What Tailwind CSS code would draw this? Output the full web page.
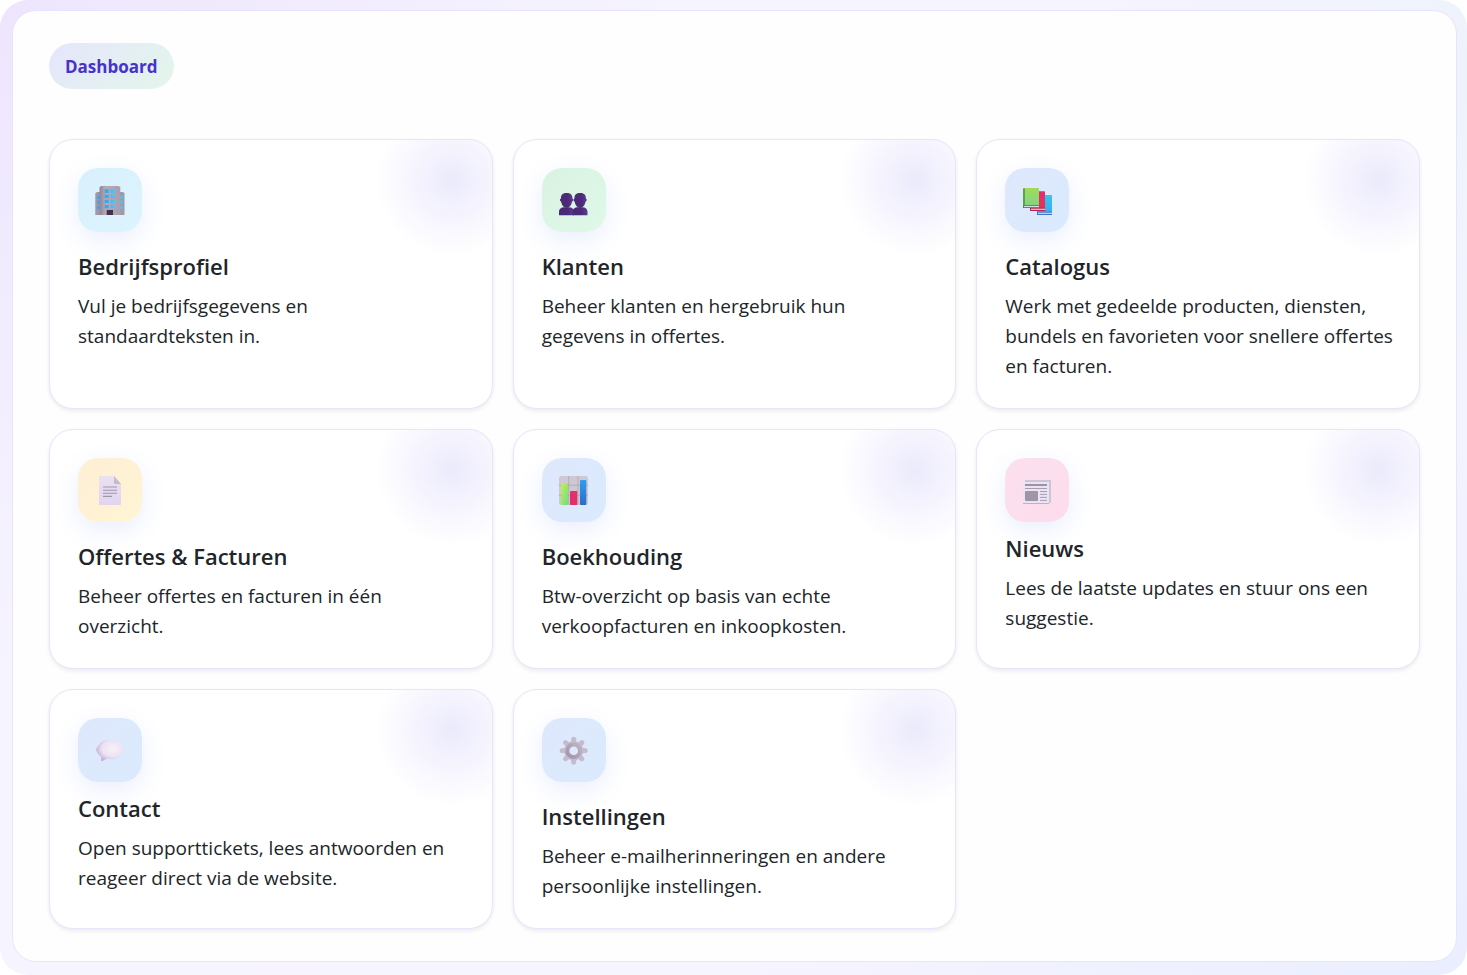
<!DOCTYPE html>
<html lang="nl">
<head>
<meta charset="utf-8">
<meta name="viewport" content="width=device-width, initial-scale=1">
<title>Dashboard</title>
<script src="https://cdn.jsdelivr.net/npm/@tailwindcss/browser@4"></script>
</head>
<body class="bg-white font-['Open_Sans','Noto_Sans',sans-serif] text-[#212529]">
<svg class="absolute size-0" aria-hidden="true">
  <defs>
    <linearGradient id="wall"><stop offset="0" stop-color="#8f8494"/><stop offset=".3" stop-color="#b5abb8"/><stop offset="1" stop-color="#a99fac"/></linearGradient>
    <linearGradient id="glass"><stop offset="0" stop-color="#2fa5ee"/><stop offset="1" stop-color="#4cc8fb"/></linearGradient>
    <linearGradient id="person"><stop offset="0" stop-color="#4a2a72"/><stop offset=".6" stop-color="#4b2a78"/><stop offset="1" stop-color="#633a92"/></linearGradient>
    <linearGradient id="green" x2="0" y2="1"><stop offset="0" stop-color="#a0dc58"/><stop offset="1" stop-color="#7ed389"/></linearGradient>
    <linearGradient id="red" x2="0" y2="1"><stop offset="0" stop-color="#e22d74"/><stop offset="1" stop-color="#e2364e"/></linearGradient>
    <linearGradient id="blue" x2="0" y2="1"><stop offset="0" stop-color="#35c5f0"/><stop offset="1" stop-color="#3fa8ef"/></linearGradient>
    <linearGradient id="paper" x2="0" y2="1"><stop offset="0" stop-color="#e9e2f0"/><stop offset="1" stop-color="#e1d4f0"/></linearGradient>
    <linearGradient id="bar1" x2="1" y2="1"><stop offset="0" stop-color="#c5ee55"/><stop offset="1" stop-color="#6ee07a"/></linearGradient>
    <linearGradient id="bar3" x2="0" y2="1"><stop offset="0" stop-color="#2f9df0"/><stop offset="1" stop-color="#2d6cc4"/></linearGradient>
    <radialGradient id="speech" cx=".6" cy=".4" r=".6"><stop offset="0" stop-color="#f7f1f8"/><stop offset=".65" stop-color="#ece2f1"/><stop offset="1" stop-color="#c9b3db"/></radialGradient>
    <linearGradient id="cog" gradientUnits="userSpaceOnUse" x1="0" y1="2" x2="0" y2="31"><stop offset="0" stop-color="#c6bccb"/><stop offset="1" stop-color="#c8b2da"/></linearGradient>
    <linearGradient id="hub" x1="1" x2="0" y2="1"><stop offset="0" stop-color="#bdb4c3"/><stop offset="1" stop-color="#a094ab"/></linearGradient>
  </defs>
</svg>
<div class="min-h-screen rounded-[28px] bg-[radial-gradient(circle_at_0%_0%,#ede5fd,transparent_38%),radial-gradient(circle_at_100%_8%,#edf3fb,transparent_22%),linear-gradient(135deg,#f7f4ff_0%,#f6f4ff_70%,#eaeeff_100%)] pt-[10px] pr-[10px] pb-[13px] pl-[12px]">
  <main class="rounded-3xl border border-[#e8e4ff] bg-[#fefefe] px-9 pt-8 pb-8">
    <h1 class="inline-flex h-[46px] items-center rounded-full bg-[linear-gradient(135deg,#e5e6fc,#e3f6ea)] px-4 pt-px text-[17px] font-bold text-[#4733c9]">Dashboard</h1>
    <div class="mt-[50px] grid grid-cols-3 gap-5">

      <a href="#bedrijfsprofiel" class="rounded-3xl border border-[#e8e4fb] bg-white bg-[radial-gradient(circle_at_calc(100%-40px)_40px,#ebeafc,#f5f4fe_36px,#fff_76px)] px-7 pt-7 pb-[27px] shadow-[0_2px_4px_rgba(0,0,0,0.08)]">
        <span class="flex size-16 items-center justify-center rounded-[20px] bg-[linear-gradient(135deg,#d8f0fb,#ddf4ff)] shadow-[0_8px_24px_rgba(79,125,250,0.12)]">
          <svg class="size-8" viewBox="0 0 32 32" aria-hidden="true">
            <path d="M1.3 9.2 3 8h4v23H1.3zM25 8h4l1.5 1.2V31H25z" fill="#a197a6"/>
            <path d="M5.5 3.5 7 2h18l1.3 1.5V31H5.5z" fill="url(#wall)"/>
            <g fill="url(#glass)"><path d="M10.8 5.3H15V9h-4.2zM16.8 5.3H21V9h-4.2zM10.8 10.7H15V14h-4.2zM16.8 10.7H21V14h-4.2zM10.8 15.8H15V19h-4.2zM16.8 15.8H21V19h-4.2zM10.8 21H15v3.2h-4.2zM16.8 21H21v3.2h-4.2z"/><path d="M3.5 11.5h2V15h-2zM3.5 16.5h2V20h-2zM3.5 22h2v3h-2zM26.5 11.5h2V15h-2zM26.5 16.5h2V20h-2zM26.5 22h2v3h-2z"/></g>
            <path d="M12.7 26H19v5h-6.3z" fill="#42304f"/>
          </svg>
        </span>
        <h2 class="mt-[19px] text-[22px]/[30px] font-semibold">Bedrijfsprofiel</h2>
        <p class="mt-[10px] text-[19px]/[30px]">Vul je bedrijfsgegevens en standaardteksten in.</p>
      </a>

      <a href="#klanten" class="rounded-3xl border border-[#e8e4fb] bg-white bg-[radial-gradient(circle_at_calc(100%-40px)_40px,#ebeafc,#f5f4fe_36px,#fff_76px)] px-7 pt-7 pb-[27px] shadow-[0_2px_4px_rgba(0,0,0,0.08)]">
        <span class="flex size-16 items-center justify-center rounded-[20px] bg-[linear-gradient(135deg,#d9f2e2,#dff9e9)] shadow-[0_8px_24px_rgba(79,125,250,0.12)]">
          <svg class="size-8" viewBox="0 0 32 32" aria-hidden="true">
            <g id="bust" fill="url(#person)"><path d="M3 14.5C2.8 10.5 5 9 8.600 9s6 1.500 5.800 5.500c1.200.3 1.200 2.700-.4 3.200-.5 3.400-2.600 6-5.400 6s-4.900-2.600-5.400-6c-1.600-.5-1.600-2.900-.2-3.200z"/><path d="M1 31.300v-3.500c0-3 2.500-4.600 5-4.600h5c3 0 5 1.800 5 4.600v3.500z"/></g>
            <use href="#bust" x="13.500"/>
          </svg>
        </span>
        <h2 class="mt-[19px] text-[22px]/[30px] font-semibold">Klanten</h2>
        <p class="mt-[10px] text-[19px]/[30px]">Beheer klanten en hergebruik hun gegevens in offertes.</p>
      </a>

      <a href="#catalogus" class="rounded-3xl border border-[#e8e4fb] bg-white bg-[radial-gradient(circle_at_calc(100%-40px)_40px,#ebeafc,#f5f4fe_36px,#fff_76px)] px-7 pt-7 pb-[27px] shadow-[0_2px_4px_rgba(0,0,0,0.08)]">
        <span class="flex size-16 items-center justify-center rounded-[20px] bg-[linear-gradient(135deg,#dfe8fc,#daeafe)] shadow-[0_8px_24px_rgba(79,125,250,0.12)]">
          <svg class="size-8" viewBox="0 0 32 32" aria-hidden="true">
            <rect x="16" y="11" width="15" height="20" rx=".7" fill="url(#blue)"/><path d="M16 27.700h15V31H16z" fill="#3d74c9"/><path d="M17 28.700h14v1.200H17z" fill="#d9d8f2"/>
            <rect x="9" y="7.300" width="15" height="19.700" rx=".7" fill="url(#red)"/><path d="M9 23.700h15V27H9z" fill="#b52450"/><path d="M10 24.700h14v1.200H10z" fill="#eccfe0"/>
            <rect x="2" y="4" width="16" height="20" rx=".7" fill="url(#green)"/><path d="M2 4.500h2V24H2z" fill="#5aa54a"/><path d="M2 21h16v3H2z" fill="#40866f"/><path d="M3 21.900h15v1.200H3z" fill="#d8dfdd"/>
          </svg>
        </span>
        <h2 class="mt-[19px] text-[22px]/[30px] font-semibold">Catalogus</h2>
        <p class="-mr-3 mt-[10px] text-[19px]/[30px]">Werk met gedeelde producten, diensten, bundels en favorieten voor snellere offertes en facturen.</p>
      </a>

      <a href="#offertes" class="rounded-3xl border border-[#e8e4fb] bg-white bg-[radial-gradient(circle_at_calc(100%-40px)_40px,#ebeafc,#f5f4fe_36px,#fff_76px)] px-7 pt-7 pb-[27px] shadow-[0_2px_4px_rgba(0,0,0,0.08)]">
        <span class="flex size-16 items-center justify-center rounded-[20px] bg-[linear-gradient(135deg,#feeed6,#fff5d2)] shadow-[0_8px_24px_rgba(79,125,250,0.12)]">
          <svg class="size-8" viewBox="0 0 32 32" aria-hidden="true">
            <path d="M5 3q0-1 1-1h14l7 8v20q0 1-1 1H6q-1 0-1-1z" fill="url(#paper)"/><path d="m20 2 7 8h-6q-1 0-1-1z" fill="#c4bcc9"/>
            <path d="M9 13h14M9 16.200h14M9 19.300h14M9 22.400h9" stroke="#a095a9" stroke-width="1.100"/>
          </svg>
        </span>
        <h2 class="mt-[19px] text-[22px]/[30px] font-semibold">Offertes &amp; Facturen</h2>
        <p class="mt-[10px] text-[19px]/[30px]">Beheer offertes en facturen in één overzicht.</p>
      </a>

      <a href="#boekhouding" class="rounded-3xl border border-[#e8e4fb] bg-white bg-[radial-gradient(circle_at_calc(100%-40px)_40px,#ebeafc,#f5f4fe_36px,#fff_76px)] px-7 pt-7 pb-[27px] shadow-[0_2px_4px_rgba(0,0,0,0.08)]">
        <span class="flex size-16 items-center justify-center rounded-[20px] bg-[linear-gradient(135deg,#dfe8fc,#daeafe)] shadow-[0_8px_24px_rgba(79,125,250,0.12)]">
          <svg class="size-8" viewBox="0 0 32 32" aria-hidden="true">
            <rect x="1" y="2" width="29" height="29" rx="2.500" fill="#cfc8d4"/>
            <path d="M10.700 2v29M20 2v29M1 11.200h29M1 21.300h29" stroke="#b1a8b7" stroke-width=".9"/>
            <rect x="3" y="9" width="7" height="22" rx=".8" fill="url(#bar1)"/><rect x="12" y="17" width="7.300" height="14" rx=".8" fill="#e3306a"/><rect x="22" y="6" width="6.300" height="25" rx=".8" fill="url(#bar3)"/>
          </svg>
        </span>
        <h2 class="mt-[19px] text-[22px]/[30px] font-semibold">Boekhouding</h2>
        <p class="mt-[10px] text-[19px]/[30px]">Btw-overzicht op basis van echte verkoopfacturen en inkoopkosten.</p>
      </a>

      <a href="#nieuws" class="rounded-3xl border border-[#e8e4fb] bg-white bg-[radial-gradient(circle_at_calc(100%-40px)_40px,#ebeafc,#f5f4fe_36px,#fff_76px)] px-7 pt-7 pb-[27px] shadow-[0_2px_4px_rgba(0,0,0,0.08)]">
        <span class="flex size-16 items-center justify-center rounded-[20px] bg-[linear-gradient(135deg,#fbe0ee,#fddcec)] shadow-[0_8px_24px_rgba(79,125,250,0.12)]">
          <svg class="size-8" viewBox="0 0 32 32" aria-hidden="true">
            <path d="M4 6h26v23H4z" fill="#cdc4d6"/><path d="M2 8h26v21.500H2z" fill="#ebe3f3"/><path d="M2 29h26v1H2z" fill="#c3a9df"/>
            <path d="M4 11h22" stroke="#9c92a4" stroke-width="2"/><path d="M4 14.500h22M19 17.500h7M19 20.400h7M19 23.400h7M19 26.400h7" stroke="#a79dae"/>
            <rect x="4" y="17" width="13" height="10" rx="1" fill="#9f95a6"/>
          </svg>
        </span>
        <h2 class="mt-[11px] text-[22px]/[30px] font-semibold">Nieuws</h2>
        <p class="mt-[10px] text-[19px]/[30px]">Lees de laatste updates en stuur ons een suggestie.</p>
      </a>

      <a href="#contact" class="rounded-3xl border border-[#e8e4fb] bg-white bg-[radial-gradient(circle_at_calc(100%-40px)_40px,#ebeafc,#f5f4fe_36px,#fff_76px)] px-7 pt-7 pb-[27px] shadow-[0_2px_4px_rgba(0,0,0,0.08)]">
        <span class="flex size-16 items-center justify-center rounded-[20px] bg-[linear-gradient(135deg,#dfe8fc,#daeafe)] shadow-[0_8px_24px_rgba(79,125,250,0.12)]">
          <svg class="size-8" viewBox="0 0 32 32" aria-hidden="true">
            <path d="M12 6.200h8c5 1 8 4.500 10 9.300-2 5-5.500 8.500-10 9.300h-7.500q-2.500 2.200-5.500 2.500v-4.500C4.500 21 3 18.500 2 15.500 4 10.500 7.500 7.300 12 6.200z" fill="url(#speech)"/>
          </svg>
        </span>
        <h2 class="mt-[11px] text-[22px]/[30px] font-semibold">Contact</h2>
        <p class="mt-[10px] text-[19px]/[30px]">Open supporttickets, lees antwoorden en reageer direct via de website.</p>
      </a>

      <a href="#instellingen" class="rounded-3xl border border-[#e8e4fb] bg-white bg-[radial-gradient(circle_at_calc(100%-40px)_40px,#ebeafc,#f5f4fe_36px,#fff_76px)] px-7 pt-7 pb-[27px] shadow-[0_2px_4px_rgba(0,0,0,0.08)]">
        <span class="flex size-16 items-center justify-center rounded-[20px] bg-[linear-gradient(135deg,#dfe8fc,#daeafe)] shadow-[0_8px_24px_rgba(79,125,250,0.12)]">
          <svg class="size-8" viewBox="0 0 32 32" aria-hidden="true">
            <g fill="url(#cog)"><circle cx="15.700" cy="16.700" r="9.500"/>
              <path id="tooth" d="M12.800 9 13.300 4.500q.3-1.800 2.400-1.800t2.400 1.800l.5 4.500z"/>
              <use href="#tooth" transform="rotate(45 15.700 16.700)"/><use href="#tooth" transform="rotate(90 15.700 16.700)"/><use href="#tooth" transform="rotate(135 15.700 16.700)"/><use href="#tooth" transform="rotate(180 15.700 16.700)"/><use href="#tooth" transform="rotate(225 15.700 16.700)"/><use href="#tooth" transform="rotate(270 15.700 16.700)"/><use href="#tooth" transform="rotate(315 15.700 16.700)"/></g>
            <circle cx="15.700" cy="16.700" r="6.300" fill="none" stroke="url(#hub)" stroke-width="4"/><circle cx="15.700" cy="16.700" r="4.300" fill="#dee9fd"/>
          </svg>
        </span>
        <h2 class="mt-[19px] text-[22px]/[30px] font-semibold">Instellingen</h2>
        <p class="mt-[10px] text-[19px]/[30px]">Beheer e-mailherinneringen en andere persoonlijke instellingen.</p>
      </a>

    </div>
  </main>
</div>
</body>
</html>
